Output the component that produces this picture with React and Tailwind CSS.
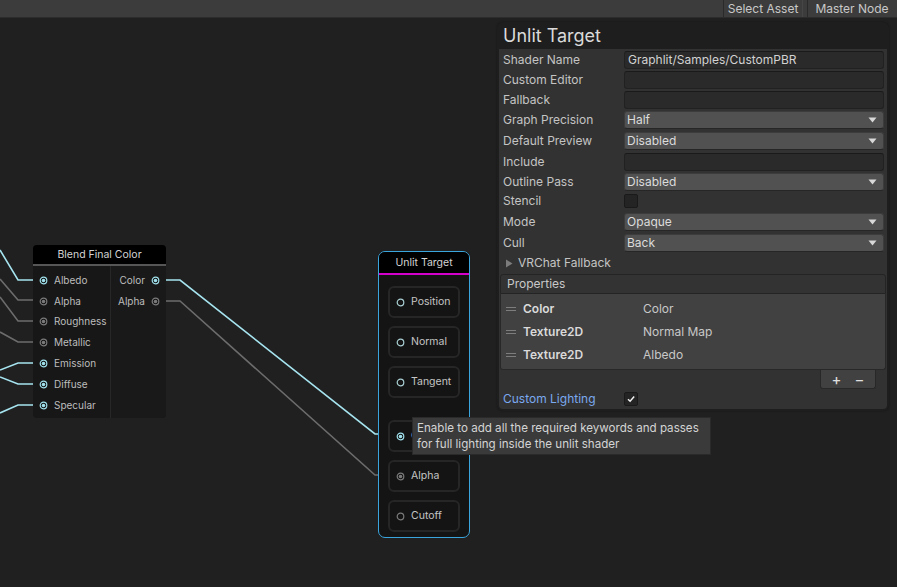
import React from "react";

const CYAN = "#a6e4f0";
const GRAY = "#6c6c6c";

function Port({ linked = false, hollow = false, light = false }) {
  const ring = linked ? "#9fe0ec" : light ? "#a9cfd3" : "#7a7a7a";
  return (
    <svg width="9" height="9" viewBox="0 0 9 9" className="shrink-0">
      <circle cx="4.5" cy="4.5" r="3.3" fill="#141414" stroke={ring} strokeWidth="1.2" />
      {!hollow && <circle cx="4.5" cy="4.5" r="1.8" fill={ring} />}
    </svg>
  );
}

function Arrow() {
  return (
    <svg width="9" height="6" viewBox="0 0 9 6" className="shrink-0">
      <path d="M0.5 0.5 L8.5 0.5 L4.5 5.5 Z" fill="#d8d8d8" />
    </svg>
  );
}

function TextField({ value = "" }) {
  return (
    <div className="flex-1 h-[18px] bg-[#2a2a2a] border border-[#212121] border-t-[#1a1a1a] rounded-[3px] px-[3px] text-[12px] leading-[16px] text-[#d2d2d2]">
      {value}
    </div>
  );
}

function Dropdown({ value }) {
  return (
    <div className="flex-1 h-[18px] bg-[#515151] border border-[#3c3c3c] border-b-[#262626] rounded-[3px] pl-[2px] pr-[6px] flex items-center justify-between text-[12px] text-[#dcdcdc]">
      <span>{value}</span>
      <Arrow />
    </div>
  );
}

function Row({ label, h = "h-[20px]", children }) {
  return (
    <div className={`flex items-start ${h}`}>
      <div className="w-[121px] h-[18px] leading-[18px] text-[12px] text-[#c4c4c4] shrink-0">{label}</div>
      {children}
    </div>
  );
}

function Checkbox({ checked = false }) {
  return (
    <div className="w-[14px] h-[14px] rounded-[2px] bg-[#242424] border border-[#1a1a1a] flex items-center justify-center">
      {checked && (
        <svg width="10" height="10" viewBox="0 0 10 10">
          <path d="M2 5.2 L4.1 7.2 L8.2 2.6" fill="none" stroke="#f0f0f0" strokeWidth="1.5" />
        </svg>
      )}
    </div>
  );
}

function Inspector() {
  const props = [
    ["Color", "Color"],
    ["Texture2D", "Normal Map"],
    ["Texture2D", "Albedo"],
  ];
  return (
    <div className="absolute left-[497px] top-[4px] w-[392px] rounded-md bg-[#1e1e1e] shadow-[0_0_2px_#151515] flex flex-col">
      <div className="h-[27px] pt-[2px] pl-[6px] text-[18px] leading-[24px] text-[#dadada]">Unlit Target</div>
      <div className="mx-[2px] mb-[2px] bg-[#323232] rounded-b-[4px] pt-[2px] pl-[4px] pr-[3px] flex flex-col">
        <Row label="Shader Name"><TextField value="Graphlit/Samples/CustomPBR" /></Row>
        <Row label="Custom Editor"><TextField /></Row>
        <Row label="Fallback"><TextField /></Row>
        <Row label="Graph Precision" h="h-[21px]"><Dropdown value="Half" /></Row>
        <Row label="Default Preview" h="h-[21px]"><Dropdown value="Disabled" /></Row>
        <Row label="Include"><TextField /></Row>
        <Row label="Outline Pass" h="h-[21px]"><Dropdown value="Disabled" /></Row>
        <div className="flex items-center h-[19px]">
          <div className="w-[121px] text-[12px] text-[#c4c4c4] -mt-[5px]">Stencil</div>
          <div className="-mt-[5px]"><Checkbox /></div>
        </div>
        <Row label="Mode" h="h-[21px]"><Dropdown value="Opaque" /></Row>
        <Row label="Cull" h="h-[21px]"><Dropdown value="Back" /></Row>
        <div className="h-[16px] flex items-center gap-[5px] pl-[2px] text-[12px] text-[#c4c4c4]">
          <svg width="8" height="9" viewBox="0 0 8 9"><path d="M1 0.5 L7.5 4.5 L1 8.5 Z" fill="#7c7c7c" /></svg>
          <span>VRChat Fallback</span>
        </div>
        <div className="mt-[3px] -ml-[3px] mr-[-2px] flex flex-col">
          <div className="h-[20px] border border-[#242424] rounded-t-[3px] bg-[#333333] pl-[6px] text-[12px] leading-[18px] text-[#c8c8c8]">Properties</div>
          <div className="bg-[#414141] border-x border-b border-[#282828] rounded-b-[3px] pt-[3px] pb-[3px]">
            {props.map(([t, n], i) => (
              <div key={i} className="h-[23px] flex items-center">
                <div className="w-[22px] pl-[5px] flex flex-col gap-[2px]">
                  <div className="w-[10px] h-[1px] bg-[#7d7d7d]" />
                  <div className="w-[10px] h-[1px] bg-[#7d7d7d]" />
                </div>
                <div className="w-[120px] text-[12px] font-semibold text-[#dadada]">{t}</div>
                <div className="text-[12px] text-[#c8c8c8]">{n}</div>
              </div>
            ))}
          </div>
          <div className="self-end mr-[10px] w-[56px] h-[19px] bg-[#414141] border-x border-b border-[#282828] rounded-b-[3px] flex items-center justify-around px-[4px] text-[15px] leading-none text-[#e0e0e0]">
            <span>+</span>
            <span>−</span>
          </div>
        </div>
        <div className="h-[20px] flex items-center">
          <div className="w-[121px] text-[12px] text-[#7aa9ef]">Custom Lighting</div>
          <Checkbox checked />
        </div>
      </div>
    </div>
  );
}

function BlendNode() {
  const inputs = [
    ["Albedo", true],
    ["Alpha", false],
    ["Roughness", false],
    ["Metallic", false],
    ["Emission", true],
    ["Diffuse", true],
    ["Specular", true],
  ];
  return (
    <div className="absolute left-[33px] top-[227px] w-[133px] h-[173px] rounded-[4px] bg-[#171717] flex flex-col overflow-hidden">
      <div className="h-[19px] bg-black text-center text-[10.5px] leading-[19px] text-[#d4d4d4]">Blend Final Color</div>
      <div className="h-[2px] bg-[#565656]" />
      <div className="flex flex-1">
        <div className="w-[78px] border-r border-[#272727] pt-[4px]">
          {inputs.map(([l, linked]) => (
            <div key={l} className="h-[20.8px] flex items-center gap-[6px] pl-[6px] text-[10px] text-[#bdbdbd]">
              <Port linked={linked} />
              <span>{l}</span>
            </div>
          ))}
        </div>
        <div className="flex-1 bg-[#191919] pt-[4px]">
          {[["Color", true], ["Alpha", false]].map(([l, linked]) => (
            <div key={l} className="h-[20.8px] flex items-center justify-end gap-[6px] pr-[6px] text-[10px] text-[#bdbdbd]">
              <span>{l}</span>
              <Port linked={linked} />
            </div>
          ))}
        </div>
      </div>
    </div>
  );
}

function Slot({ label, port, className = "" }) {
  return (
    <div className={`ml-[9px] w-[72px] h-[32px] rounded-[6px] border-2 border-[#262626] bg-[#141414] flex items-center gap-[6px] pl-[6px] text-[10.5px] text-[#c4c4c4] whitespace-nowrap overflow-hidden ${className}`}>
      {port}
      <span>{label}</span>
    </div>
  );
}

function UnlitNode() {
  return (
    <div className="absolute left-[378px] top-[233px] w-[92px] h-[287px] rounded-[7px] border border-[#3aa4dc] bg-[#141414] flex flex-col">
      <div className="h-[21px] bg-black rounded-t-[6px] text-center text-[10.5px] leading-[21px] text-[#d4d4d4]">Unlit Target</div>
      <div className="h-[2px] bg-[#d400cc]" />
      <Slot label="Position" port={<Port hollow light />} className="mt-[11px]" />
      <Slot label="Normal" port={<Port hollow light />} className="mt-[8px]" />
      <Slot label="Tangent" port={<Port hollow light />} className="mt-[8px]" />
      <Slot label="Custom Lighting" port={<Port linked />} className="mt-[22px]" />
      <Slot label="Alpha" port={<Port />} className="mt-[8px]" />
      <Slot label="Cutoff" port={<Port hollow />} className="mt-[8px]" />
    </div>
  );
}

function Wires() {
  const cyan = [
    "M0 250 L18 280 L34 280",
    "M0 370 L18 363 L34 363",
    "M0 377 L18 384 L34 384",
    "M0 413 L18 405 L34 405",
    "M166 280 L180 280 L375 434 L388 434",
  ];
  const gray = [
    "M0 279 L18 300 L34 300",
    "M0 297 L18 321 L34 321",
    "M0 332 L18 342 L34 342",
    "M166 301 L180 301 L375 475 L388 475",
  ];
  return (
    <svg className="absolute inset-0" width="897" height="569" viewBox="0 18 897 569">
      {gray.map((d, i) => (
        <path key={"g" + i} d={d} fill="none" stroke={GRAY} strokeWidth="1.6" />
      ))}
      {cyan.map((d, i) => (
        <path key={"c" + i} d={d} fill="none" stroke={CYAN} strokeWidth="1.6" />
      ))}
    </svg>
  );
}

export default function App() {
  return (
    <div className="w-[897px] h-[587px] bg-[#202020] flex flex-col overflow-hidden font-['Inter','Noto_Sans',sans-serif]">
      <div className="h-[18px] bg-[#3c3c3c] border-b border-[#2c2c2c] flex justify-end items-stretch pr-[1px] shrink-0">
        <div className="w-[80px] text-center border-l border-[#2a2a2a] border-r border-r-[#464646] text-[12px] leading-[17px] text-[#c8c8c8]">Select Asset</div>
        <div className="ml-[4px] w-[89px] text-center border-l border-[#2a2a2a] text-[12px] leading-[17px] text-[#c8c8c8]">Master Node</div>
      </div>
      <div className="relative flex-1">
        <Wires />
        <BlendNode />
        <UnlitNode />
        <Inspector />
        <div className="absolute left-[412px] top-[399px] w-[299px] h-[38px] bg-[#3a3a3a] border border-[#2a2a2a] px-[4px] pt-[2px] text-[11.6px] leading-[16px] text-[#d4d4d4] whitespace-nowrap overflow-hidden">
          Enable to add all the required keywords and passes
          <br />
          for full lighting inside the unlit shader
        </div>
      </div>
    </div>
  );
}
